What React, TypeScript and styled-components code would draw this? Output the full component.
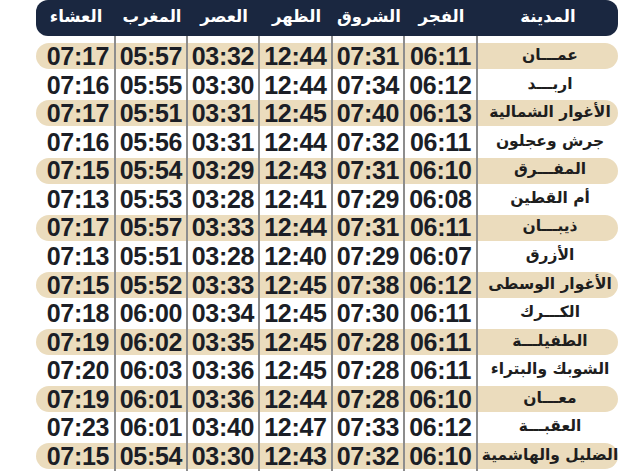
import styled, { createGlobalStyle } from "styled-components";

const GlobalStyle = createGlobalStyle`
  html, body {
    margin: 0;
    padding: 0;
    background: #ffffff;
  }
  body {
    font-family: "Liberation Sans", "DejaVu Sans", sans-serif;
  }
`;

// right-to-left: city, fajr, shurooq, dhuhr, asr, maghrib, isha
const COLUMNS = "140px 73px 72px 73px 72px 72px 80px";

const Page = styled.div`
  width: 642px;
  height: 472px;
  overflow: hidden;
  box-sizing: border-box;
  padding: 0 24px 0 36px;
  direction: rtl;
`;

const Header = styled.div`
  display: grid;
  grid-template-columns: ${COLUMNS};
  height: 36px;
  align-items: center;
  background: #1a2740;
  border-radius: 12px;
`;

const HeadCell = styled.div`
  color: #ffffff;
  font-family: "DejaVu Sans", sans-serif;
  font-weight: 700;
  font-size: 16.5px;
  text-align: center;
  padding-bottom: 3px;
`;

const Body = styled.div`
  display: flex;
  flex-direction: column;
`;

const Row = styled.div<{ $band?: boolean; $spacer?: boolean }>`
  position: relative;
  isolation: isolate;
  display: grid;
  grid-template-columns: ${COLUMNS};
  height: ${(p) => (p.$spacer ? "6px" : "28.57px")};

  &::before {
    content: "";
    position: absolute;
    inset: 1.3px 0;
    z-index: -1;
    border-radius: 13px;
    background: ${(p) => (p.$band ? "#ebdcbd" : "transparent")};
  }
`;

const CityCell = styled.div`
  display: flex;
  align-items: center;
  justify-content: center;
  font-family: "DejaVu Sans", sans-serif;
  font-weight: 700;
  font-size: 15.5px;
  color: #1e1e1e;
  white-space: nowrap;
  padding-bottom: 3px;
  padding-left: 4px;
`;

const TimeCell = styled.div`
  display: flex;
  align-items: center;
  justify-content: center;
  direction: ltr;
  border-right: 2px solid #8d8d8d;
  font-family: "Liberation Sans", Arial, sans-serif;
  font-weight: 700;
  font-size: 25px;
  color: #1b1e26;
  letter-spacing: -0.3px;
`;

const LastCell = styled(TimeCell)`
  padding-left: 6px;
`;

const headings = ["المدينة", "الفجر", "الشروق", "الظهر", "العصر", "المغرب", "العشاء"];

const rows: [string, string[]][] = [
  ["عمـــان", ["06:11", "07:31", "12:44", "03:32", "05:57", "07:17"]],
  ["اربـــد", ["06:12", "07:34", "12:44", "03:30", "05:55", "07:16"]],
  ["الأغوار الشمالية", ["06:13", "07:40", "12:45", "03:31", "05:51", "07:17"]],
  ["جرش وعجلون", ["06:11", "07:32", "12:44", "03:31", "05:56", "07:16"]],
  ["المفـــرق", ["06:10", "07:31", "12:43", "03:29", "05:54", "07:15"]],
  ["أم القطين", ["06:08", "07:29", "12:41", "03:28", "05:53", "07:13"]],
  ["ذيبـــان", ["06:11", "07:31", "12:44", "03:33", "05:57", "07:17"]],
  ["الأزرق", ["06:07", "07:29", "12:40", "03:28", "05:51", "07:13"]],
  ["الأغوار الوسطى", ["06:12", "07:38", "12:45", "03:33", "05:52", "07:15"]],
  ["الكـــرك", ["06:11", "07:30", "12:45", "03:34", "06:00", "07:18"]],
  ["الطفيلـــة", ["06:11", "07:28", "12:45", "03:35", "06:02", "07:19"]],
  ["الشوبك والبتراء", ["06:11", "07:28", "12:45", "03:36", "06:03", "07:20"]],
  ["معـــان", ["06:10", "07:28", "12:44", "03:36", "06:01", "07:19"]],
  ["العقبـــة", ["06:12", "07:33", "12:47", "03:40", "06:01", "07:23"]],
  ["الضليل والهاشمية", ["06:10", "07:32", "12:43", "03:30", "05:54", "07:15"]],
];

export default function App() {
  return (
    <>
      <GlobalStyle />
      <Page>
        <Header>
          {headings.map((h) => (
            <HeadCell key={h}>{h}</HeadCell>
          ))}
        </Header>
        <Body>
          <Row $spacer>
            <div />
            {[0, 1, 2, 3, 4, 5].map((i) => (
              <TimeCell key={i} />
            ))}
          </Row>
          {rows.map(([city, times], idx) => (
            <Row key={city} $band={idx % 2 === 0}>
              <CityCell>{city}</CityCell>
              {times.map((t, i) =>
                i === times.length - 1 ? (
                  <LastCell key={i}>{t}</LastCell>
                ) : (
                  <TimeCell key={i}>{t}</TimeCell>
                )
              )}
            </Row>
          ))}
        </Body>
      </Page>
    </>
  );
}
